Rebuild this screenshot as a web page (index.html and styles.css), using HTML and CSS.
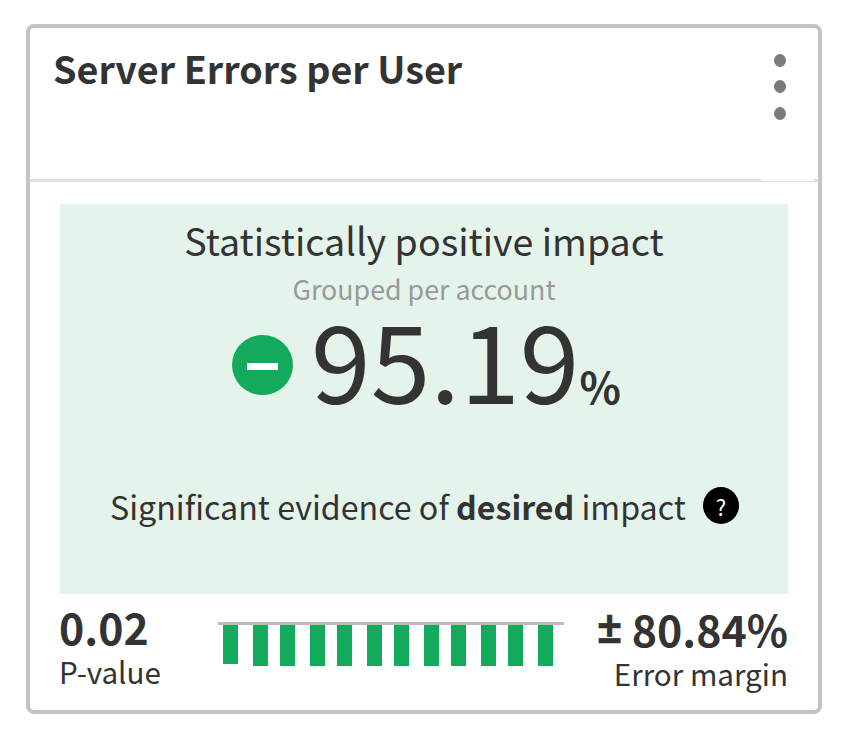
FILE: index.html
```html
<!DOCTYPE html>
<html lang="en">
<head>
<meta charset="utf-8">
<title>Server Errors per User</title>
<link rel="stylesheet" href="styles.css">
</head>
<body>
<article class="card">
  <header class="card-header">
    <h1 class="title">Server Errors per User</h1>
    <div class="menu"><i></i><i></i><i></i></div>
  </header>
  <section class="impact">
    <h2 class="impact-title">Statistically positive impact</h2>
    <p class="grouping">Grouped per account</p>
    <div class="figure">
      <span class="minus"><i></i></span>
      <span class="number">95.19</span><span class="percent">%</span>
    </div>
    <div class="evidence">
      <span>Significant evidence of <b>desired</b> impact</span>
      <span class="help">?</span>
    </div>
  </section>
  <footer class="stats">
    <div class="stat">
      <div class="stat-value">0.02</div>
      <div class="stat-label">P-value</div>
    </div>
    <div class="bars"><i></i><i></i><i></i><i></i><i></i><i></i><i></i><i></i><i></i><i></i><i></i><i></i></div>
    <div class="stat right">
      <div class="stat-value"><span class="sign">±</span> 80.84%</div>
      <div class="stat-label">Error margin</div>
    </div>
  </footer>
</article>
</body>
</html>
```
FILE: styles.css
```css
* { box-sizing: border-box; margin: 0; padding: 0; }
body { background: #fff; color: #333; font-family: "Noto Sans CJK SC", sans-serif; padding: 24px 26px; }
.card { width: 796px; height: 690px; border: 4px solid #c4c4c4; border-radius: 8px; background: #fff; }
.card-header { position: relative; height: 154px; border-bottom: 3px solid #e2e2e2; display: flex; justify-content: space-between; padding: 15px 32px 0 23px; }
.card-header::after { content: ""; position: absolute; right: 4px; bottom: -2px; width: 53px; height: 2px; background: #fff; }
.title { font-size: 37.7px; line-height: 50px; font-weight: 700; white-space: nowrap; }
.menu { display: flex; flex-direction: column; gap: 13.3px; padding-top: 11px; }
.menu i { width: 12px; height: 13px; border-radius: 50%; background: #7b7b7b; }
.impact { width: 728px; height: 390px; margin: 22px 0 0 30px; background: #e5f4eb; text-align: center; white-space: nowrap; padding-top: 10px; }
.impact-title { font-size: 37.6px; line-height: 52px; font-weight: 400; }
.grouping { font-size: 26.8px; line-height: 41px; color: #999; padding-top: 2px; }
.figure { display: flex; height: 116px; padding-left: 172px; }
.minus { width: 61px; height: 60px; border-radius: 50%; background: #13aa5b; display: flex; align-items: center; justify-content: center; margin-top: 26px; padding-top: 2px; }
.minus i { width: 31px; height: 7px; background: #fff; }
.number { font-size: 107.5px; line-height: 108px; margin: -6px 0 0 18px; }
.percent { font-size: 43px; line-height: 60px; font-weight: 700; margin: 46px 0 0 0; }
.evidence { display: flex; padding: 57px 0 0 50px; font-size: 32.2px; line-height: 48px; }
.help { width: 36px; height: 37px; border-radius: 50%; background: #000; color: #fff; font-size: 22px; line-height: 38px; margin: 5px 0 0 17px; }
.stats { display: flex; padding-left: 29px; width: 758px; white-space: nowrap; }
.stat { width: 159px; padding-top: 6px; }
.right { flex: 1; text-align: right; padding-top: 8px; }
.stat-value { font-size: 42.8px; line-height: 52px; font-weight: 700; }
.sign { font-family: "Noto Sans", sans-serif; font-size: 44px; line-height: 1; display: inline-block; transform: translateY(-4px); -webkit-text-stroke: .5px #333; }
.stat-label { font-size: 29.6px; line-height: 40px; }
.bars { width: 346px; height: 44px; margin-top: 28px; border-top: 3px solid #bbb; display: flex; gap: 12px; padding-left: 5px; }
.bars i { width: 15px; height: 41px; background: #13aa5b; flex: none; }
.bars i:nth-child(even) { margin-left: 3px; }
.bars i:first-child { height: 39px; }
```
